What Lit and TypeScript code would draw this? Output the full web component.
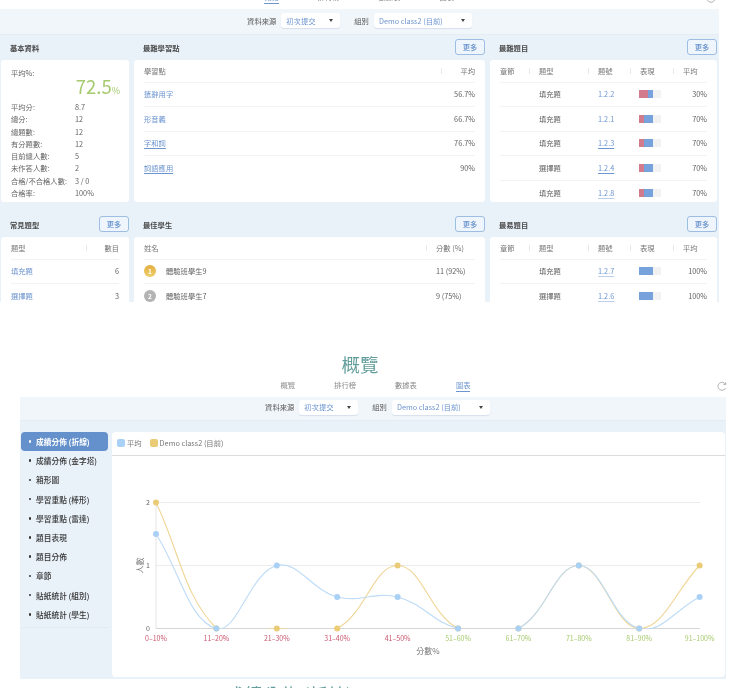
import { LitElement, html, css, svg } from "lit";
import { customElement } from "lit/decorators.js";

type Q = [string, string, number, number, string, number];

const stats: [string, string][] = [
  ["平均分:", "8.7"], ["總分:", "12"], ["總題數:", "12"], ["有分題數:", "12"],
  ["目前總人數:", "5"], ["未作答人數:", "2"], ["合格/不合格人數:", "3 / 0"], ["合格率:", "100%"],
];
const points: [string, string, boolean][] = [
  ["遣辭用字", "56.7%", false], ["形音義", "66.7%", false], ["字和詞", "76.7%", true], ["詞語應用", "90%", true],
];
const hard: Q[] = [
  ["填充題", "1.2.2", 9, 5, "30%", 0],
  ["填充題", "1.2.1", 4.6, 9.4, "70%", 0],
  ["填充題", "1.2.3", 4.6, 9.4, "70%", 2],
  ["選擇題", "1.2.4", 4.6, 9.4, "70%", 2],
  ["填充題", "1.2.8", 4.6, 9.4, "70%", 1],
];
const easy: Q[] = [
  ["填充題", "1.2.7", 0, 14, "100%", 1],
  ["選擇題", "1.2.6", 0, 14, "100%", 1],
];
const side = ["成績分佈 (折線)", "成績分佈 (金字塔)", "箱形圖", "學習重點 (棒形)", "學習重點 (雷達)", "題目表現", "題目分佈", "章節", "貼紙統計 (組別)", "貼紙統計 (學生)"];
const buckets = ["0–10%", "11–20%", "21–30%", "31–40%", "41–50%", "51–60%", "61–70%", "71–80%", "81–90%", "91–100%"];
const blue = [1.5, 0, 1, 0.5, 0.5, 0, 0, 1, 0, 0.5];
const yellow = [2, 0, 0, 0, 1, 0, 0, 1, 0, 1];

const X0 = 44, STEP = 60.4, Y0 = 172.5, UNIT = 63;
const px = (i: number) => X0 + i * STEP;
const py = (v: number) => Y0 - v * UNIT;

function spline(vals: number[], t = 0.4) {
  const p = vals.map((v, i) => [px(i), py(v)]);
  const cp = p.map((cur, i) => {
    const a = p[i - 1] ?? cur, b = p[i + 1] ?? cur;
    const d01 = Math.hypot(cur[0] - a[0], cur[1] - a[1]);
    const d12 = Math.hypot(b[0] - cur[0], b[1] - cur[1]);
    const s = d01 + d12 || 1;
    const fa = (t * d01) / s, fb = (t * d12) / s;
    return {
      px: cur[0] - fa * (b[0] - a[0]), py: cur[1] - fa * (b[1] - a[1]),
      nx: cur[0] + fb * (b[0] - a[0]), ny: cur[1] + fb * (b[1] - a[1]),
    };
  });
  let d = `M${p[0][0]} ${p[0][1]}`;
  for (let i = 1; i < p.length; i++) {
    d += ` C${cp[i - 1].nx} ${cp[i - 1].ny} ${cp[i].px} ${cp[i].py} ${p[i][0]} ${p[i][1]}`;
  }
  return d;
}

@customElement("app-root")
export class AppRoot extends LitElement {
  static styles = css`
    :host { display: block; width: 736px; height: 688px; overflow: hidden; background: #fff;
      font-family: "Noto Sans CJK TC", "Noto Sans", sans-serif; font-size: 7.3px; color: #626262; filter: blur(.3px); }
    * { box-sizing: border-box; }
    .tabrow { display: flex; align-items: flex-end; overflow: hidden; }
    .tabrow.one { height: 9px; width: 718px; padding-left: 12px; padding-right: 2px; }
    .tabrow.two { height: 23px; margin-left: 20px; width: 707px; padding-left: 14px; }
    .tabs { flex: 1; display: flex; justify-content: center; gap: 39px; }
    .tab { line-height: 10px; padding-bottom: 1px; border-bottom: 1px solid transparent; margin-bottom: 5px; color: #8a8a8a; }
    .tab.on { color: #6d95cf; border-bottom-color: #6d95cf; }
    .refresh { width: 10px; height: 10px; margin-bottom: 6px; flex: none; }
    .panel { background: #e9f1f9; }
    .panel.one { width: 719px; height: 293px; overflow: hidden; }
    .panel.two { margin-left: 20px; width: 706px; height: 282px; }
    .filter { background: #f1f6fb; display: flex; justify-content: center; align-items: center; border-bottom: 1px solid #e6ecf3; }
    .one .filter { height: 26px; padding: 0 0 2px 0; }
    .two .filter { height: 24px; padding: 0 0 3px 9px; }
    .flabel { color: #555; margin: 0 5px 0 14px; }
    .flabel:first-child { margin-left: 0; }
    .sel { height: 15px; background: #fff; border-radius: 3px; box-shadow: 0 1px 1px rgba(90, 120, 160, .18); display: flex; align-items: center; justify-content: space-between; padding: 0 7px 0 5px; color: #6d95cf; }
    .sel.a { width: 59px; } .sel.b { width: 98px; }
    .caret { width: 0; height: 0; border-left: 2.6px solid transparent; border-right: 2.6px solid transparent; border-top: 3px solid #444; }
    .grid { display: grid; grid-template-columns: 128px 351px 227px; column-gap: 5px; row-gap: 10px; padding-left: 1px; }
    .head { height: 25px; display: flex; justify-content: space-between; align-items: center; padding-left: 9px; }
    .title { font-weight: 700; color: #4a4a4a; padding-top: 1px; }
    .more { width: 30px; height: 16px; border: 1px solid #9dbde2; border-radius: 3px; background: #eef5fc; color: #6491cb; font-weight: 500; display: flex; align-items: center; justify-content: center; margin-top: -1px; }
    .card { background: #fff; border-radius: 3px; padding: 0 10px; }
    .h142 { height: 142px; }
    .tall { height: 90px; }
    .row { display: grid; align-items: center; height: 24.5px; border-bottom: 1px solid #f3f3f3; }
    .row.hd { height: 22.5px; color: #777; padding-top: 1px; }
    .row.nb { border-bottom: none; }
    .c2 { grid-template-columns: 1fr 44px; }
    .c2s { grid-template-columns: 1fr 39px; }
    .c1 { grid-template-columns: 1fr 33px; }
    .c3 { grid-template-columns: 39px 59px 42px 43px 24px; }
    .num { text-align: right; }
    .hsep { position: relative; }
    .hsep::before { content: ""; position: absolute; left: -10px; top: 2px; height: 6px; border-left: 1px solid #e8e8e8; }
    .hsep.s10::before { left: 10px; }
    .hsep.s0::before { left: 0; }
    .link { color: #6d95cf; }
    .u { text-decoration: underline; text-underline-offset: 1.5px; text-decoration-thickness: .7px; }
    .faint { text-decoration-color: #bcd0ea; }
    .bar { width: 22px; height: 8px; background: #f2f2f2; display: flex; margin-left: -1px; }
    .bar i { display: block; height: 100%; }
    .red { background: #d27b8c; } .bl { background: #78a2dc; }
    .who { display: flex; align-items: center; gap: 10px; }
    .medal { width: 12px; height: 12px; border-radius: 50%; color: #fff; font-weight: 700; display: flex; align-items: center; justify-content: center; font-size: 6.5px; }
    .gold { background: linear-gradient(#e3ad3f, #efcf6c); }
    .silver { background: #b3b3b3; }
    .stats { padding-top: 8px; }
    .big { display: flex; justify-content: flex-end; align-items: baseline; color: #a6ca6e; font-size: 18.5px; line-height: 20px; margin-top: -2px; margin-right: -1px; }
    .big small { font-size: 9px; }
    .avg { line-height: 10px; }
    .stat { display: grid; grid-template-columns: 64px 1fr; line-height: 12.3px; color: #666; }
    .h1 { height: 20px; margin-top: 52px; text-align: center; font-size: 18.5px; line-height: 20px; color: #649f9d; padding-right: 16px; }
    .body { display: flex; padding: 11px 1px 0 1px; }
    .sideb { width: 87px; flex: none; }
    .list { padding-bottom: 3px; border-bottom: 1px solid #e2e9f1; }
    .it { height: 19.2px; display: flex; align-items: center; gap: 5px; padding-left: 7.5px; color: #333; font-weight: 500; border-radius: 4px; font-size: 7.7px; }
    .it::before { content: ""; width: 2.6px; height: 2.6px; border-radius: 50%; background: #333; flex: none; }
    .it.on { background: #6491cb; color: #fff; font-weight: 700; }
    .it.on::before { background: #fff; }
    .chart { margin-left: 4px; width: 613px; height: 245px; background: #fff; border-radius: 4px; }
    .legend { height: 24px; border-bottom: 1px solid #dcdcdc; display: flex; align-items: center; padding-left: 5px; padding-bottom: 1px; color: #777; gap: 2px; }
    .sw { width: 8px; height: 8px; border-radius: 2px; }
    .sw.y { margin-left: 6px; background: #eacb76; }
    .sw.b { background: #a9d0f5; }
    svg.plot { display: block; width: 613px; height: 221px; }
    .ax { font-size: 7px; fill: #666; font-family: "Noto Sans CJK TC", "Noto Sans", sans-serif; }
    .axt { font-size: 8px; fill: #777; font-family: "Noto Sans CJK TC", "Noto Sans", sans-serif; }
    .lo { fill: #c9586d; } .hi { fill: #a6ca6e; }
    .next { margin-top: 5px; padding-left: 226px; font-size: 18.3px; line-height: 20px; color: #649f9d; }
  `;

  private tabs(on: number) {
    return html`<div class="tabs">${["概覽", "排行榜", "數據表", "圖表"].map((t, i) => html`<div class="tab ${i === on ? "on" : ""}">${t}</div>`)}</div>
      <svg class="refresh" viewBox="0 0 10 10" fill="none" stroke="#a8a8a8" stroke-width=".9"><path d="M8.4 3.2A4 4 0 1 0 8.6 7"/><path d="M8.6 1.4v2.2H6.4"/></svg>`;
  }

  private filter() {
    return html`<div class="filter">
      <span class="flabel">資料來源</span><div class="sel a"><span>初次提交</span><span class="caret"></span></div>
      <span class="flabel">組別</span><div class="sel b"><span>Demo class2 (目前)</span><span class="caret"></span></div>
    </div>`;
  }

  private qTable(rows: Q[], h: string) {
    return html`<div class="card ${h}">
      <div class="row hd c3"><span>章節</span><span class="hsep">題型</span><span class="hsep">題號</span><span class="hsep">表現</span><span class="hsep">平均</span></div>
      ${rows.map((r, i) => html`<div class="row c3 ${i === rows.length - 1 && h === "h142" ? "nb" : ""}">
        <span></span><span>${r[0]}</span>
        <span><span class="link ${r[5] ? "u" : ""} ${r[5] === 1 ? "faint" : ""}">${r[1]}</span></span>
        <div class="bar"><i class="red" style="width:${r[2]}px"></i><i class="bl" style="width:${r[3]}px"></i></div>
        <span class="num">${r[4]}</span></div>`)}
    </div>`;
  }

  private plot() {
    const curve = (vals: number[], c: string) => svg`
      <path d=${spline(vals)} fill="none" stroke=${c} stroke-width="1.1" clip-path="url(#area)"/>`;
    const dots = (vals: number[], c: string) => vals.map((v, i) => svg`<circle cx=${px(i)} cy=${py(v)} r="3" fill=${c}/>`);
    return html`<svg class="plot" viewBox="0 0 613 221">
      <defs><clipPath id="area"><rect x="40" y="30" width="552" height="143"/></clipPath></defs>
      ${[2, 1].map((v) => svg`<line x1=${X0} x2="588" y1=${py(v)} y2=${py(v)} stroke="#ececec"/>`)}
      <line x1=${X0} x2=${X0} y1=${py(2)} y2=${Y0} stroke="#e4e4e4"/>
      <line x1=${X0} x2="588" y1=${Y0} y2=${Y0} stroke="#d6d6d6"/>
      ${[0, 1, 2].map((v) => svg`<text class="ax" x="38" y=${py(v) + 2.5} text-anchor="end">${v}</text>`)}
      <text class="axt" transform="translate(31 ${py(1)}) rotate(-90)" text-anchor="middle">人數</text>
      ${buckets.map((b, i) => svg`<text class="ax ${i < 5 ? "lo" : "hi"}" x=${px(i)} y="185" text-anchor="middle">${b}</text>`)}
      <text class="axt" x="316" y="198" text-anchor="middle">分數%</text>
      ${curve(yellow, "#f0d595")}${curve(blue, "#bddbf6")}
      ${dots(yellow, "#eacb76")}${dots(blue, "#a9d0f5")}
    </svg>`;
  }

  render() {
    return html`
      <div class="tabrow one">${this.tabs(0)}</div>
      <div class="panel one">
        ${this.filter()}
        <div class="grid">
          <div>
            <div class="head"><span class="title">基本資料</span></div>
            <div class="card h142 stats">
              <div class="avg">平均%:</div>
              <div class="big">72.5<small>%</small></div>
              ${stats.map((s) => html`<div class="stat"><span>${s[0]}</span><span>${s[1]}</span></div>`)}
            </div>
          </div>
          <div>
            <div class="head"><span class="title">最難學習點</span><div class="more">更多</div></div>
            <div class="card h142">
              <div class="row hd c2"><span>學習點</span><span class="num hsep s10">平均</span></div>
              ${points.map((p, i) => html`<div class="row c2 ${i === 3 ? "nb" : ""}"><span><span class="link ${p[2] ? "u" : ""}">${p[0]}</span></span><span class="num">${p[1]}</span></div>`)}
            </div>
          </div>
          <div>
            <div class="head"><span class="title">最難題目</span><div class="more">更多</div></div>
            ${this.qTable(hard, "h142")}
          </div>
          <div>
            <div class="head"><span class="title">常見題型</span><div class="more">更多</div></div>
            <div class="card tall">
              <div class="row hd c1"><span>題型</span><span class="num hsep s0">數目</span></div>
              <div class="row c1"><span class="link">填充題</span><span class="num">6</span></div>
              <div class="row c1"><span class="link">選擇題</span><span class="num">3</span></div>
            </div>
          </div>
          <div>
            <div class="head"><span class="title">最佳學生</span><div class="more">更多</div></div>
            <div class="card tall">
              <div class="row hd c2s"><span>姓名</span><span class="hsep">分數 (%)</span></div>
              <div class="row c2s"><div class="who"><span class="medal gold">1</span>體驗班學生9</div><span>11 (92%)</span></div>
              <div class="row c2s"><div class="who"><span class="medal silver">2</span>體驗班學生7</div><span>9 (75%)</span></div>
            </div>
          </div>
          <div>
            <div class="head"><span class="title">最易題目</span><div class="more">更多</div></div>
            ${this.qTable(easy, "tall")}
          </div>
        </div>
      </div>

      <div class="h1">概覽</div>
      <div class="tabrow two">${this.tabs(3)}</div>
      <div class="panel two">
        ${this.filter()}
        <div class="body">
          <div class="sideb"><div class="list">${side.map((s, i) => html`<div class="it ${i === 0 ? "on" : ""}">${s}</div>`)}</div></div>
          <div class="chart">
            <div class="legend"><span class="sw b"></span><span>平均</span><span class="sw y"></span><span>Demo class2 (目前)</span></div>
            ${this.plot()}
          </div>
        </div>
      </div>
      <div class="next">成績分佈 (折線)</div>
    `;
  }
}
